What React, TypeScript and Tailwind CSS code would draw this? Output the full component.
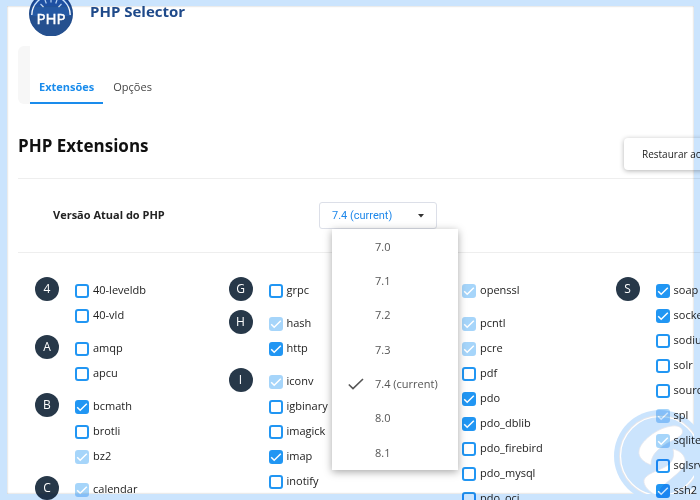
import { useState } from "react";

type State = "on" | "off" | "locked";
type Item = [name: string, state: State];
type Group = { letter: string; items: Item[] };

const columns: Group[][] = [
  [
    { letter: "4", items: [["40-leveldb", "off"], ["40-vld", "off"]] },
    { letter: "A", items: [["amqp", "off"], ["apcu", "off"]] },
    { letter: "B", items: [["bcmath", "on"], ["brotli", "off"], ["bz2", "locked"]] },
    { letter: "C", items: [["calendar", "locked"]] },
  ],
  [
    { letter: "G", items: [["grpc", "off"]] },
    { letter: "H", items: [["hash", "locked"], ["http", "on"]] },
    {
      letter: "I",
      items: [
        ["iconv", "locked"],
        ["igbinary", "off"],
        ["imagick", "off"],
        ["imap", "on"],
        ["inotify", "off"],
        ["intl", "locked"],
      ],
    },
  ],
  [
    { letter: "O", items: [["openssl", "locked"]] },
    {
      letter: "P",
      items: [
        ["pcntl", "locked"],
        ["pcre", "locked"],
        ["pdf", "off"],
        ["pdo", "on"],
        ["pdo_dblib", "on"],
        ["pdo_firebird", "off"],
        ["pdo_mysql", "off"],
        ["pdo_oci", "off"],
      ],
    },
  ],
  [
    {
      letter: "S",
      items: [
        ["soap", "on"],
        ["sockets", "on"],
        ["sodium", "off"],
        ["solr", "off"],
        ["sourceguardian", "off"],
        ["spl", "locked"],
        ["sqlite3", "locked"],
        ["sqlsrv", "off"],
        ["ssh2", "on"],
      ],
    },
  ],
];

const versions = ["7.0", "7.1", "7.2", "7.3", "7.4 (current)", "8.0", "8.1"];

function Extension({ name, state }: { name: string; state: State }) {
  return (
    <label className="flex h-[25px] items-center gap-1 text-[11px] text-[#222]">
      <span className="relative size-[14px] shrink-0">
        <input
          type="checkbox"
          defaultChecked={state !== "off"}
          disabled={state === "locked"}
          className="peer block size-[14px] appearance-none rounded-[3px] border-2 border-[#2196f3] bg-white checked:bg-[#2196f3] disabled:border-[#a6d5fa] disabled:bg-[#a6d5fa]"
        />
        <svg
          viewBox="0 0 14 14"
          className="pointer-events-none absolute inset-0 hidden size-[14px] peer-checked:block"
          fill="none"
          stroke="#fff"
          strokeWidth="1.5"
        >
          <path d="M2.2 7.2 5.2 10.2 11.8 3.8" />
        </svg>
      </span>
      {name}
    </label>
  );
}

function ExtensionGroup({ group }: { group: Group }) {
  return (
    <section className="mb-2 flex items-start gap-4">
      <h2 className="-mt-px flex size-6 shrink-0 items-center justify-center rounded-full bg-[#273849] text-xs font-medium text-white">
        {group.letter}
      </h2>
      <div>
        {group.items.map(([name, state]) => (
          <Extension key={name} name={name} state={state} />
        ))}
      </div>
    </section>
  );
}

function Logo() {
  return (
    <svg viewBox="0 0 44 44" className="size-11 shrink-0" aria-hidden="true">
      <circle cx="22" cy="22" r="22" fill="#1f4a8a" />
      <circle cx="22" cy="22" r="20.5" fill="#2559a3" />
      <path d="M1.5 24h41A20.5 20.5 0 0 1 1.5 24z" fill="#25508f" />
      <path d="M2.8 23A19.2 19.2 0 0 1 41.2 23" fill="none" stroke="#fff" strokeWidth="1.3" />
      <path
        d="M22 6v4.5M16 8l1.3 3.5M28 8l-1.3 3.5M11.5 12l3 3M32.5 12l-3 3"
        stroke="#e4ecf6"
        strokeWidth="1.2"
      />
      <text
        x="22"
        y="32"
        textAnchor="middle"
        fill="#fff"
        stroke="#fff"
        strokeWidth="0.5"
        fontSize="15"
        fontFamily="'Open Sans', sans-serif"
      >
        PHP
      </text>
    </svg>
  );
}

function Watermark() {
  return (
    <svg viewBox="0 0 92 92" className="size-[92px]" aria-hidden="true">
      <circle cx="46" cy="46" r="46" fill="#cbe4fd" />
      <circle cx="46" cy="46" r="40" fill="none" stroke="#e6e6ea" strokeWidth="2" />
      <circle cx="46" cy="46" r="39.5" fill="none" stroke="#fff" strokeWidth="1.2" />
      <g fill="#fff" stroke="#e4e6ec" strokeWidth="0.8">
        <path d="M37 55C29 52 24 47 25 41C26 32 42 18 58 16C66 15 70 19 68 24C65 28 56 31 49 36C42 41 37 46 37 55Z" />
        <path d="M59 39C67 41 72 46 71 53C69 61 57 68 49 76C46 79 45 82 44 86C36 83 29 76 30 70C32 64 43 61 51 57C58 53 61 47 59 39Z" />
      </g>
    </svg>
  );
}

export default function App() {
  const [version, setVersion] = useState("7.4 (current)");

  return (
    <div className="relative h-screen overflow-hidden bg-white font-['Open_Sans',sans-serif] text-[#222]">
      <header className="-mt-2 flex h-[54px] items-start gap-[17px] pl-[29px]">
        <Logo />
        <p className="pt-[7px] text-[15px] leading-6 font-bold text-[#1f4a8a]">PHP Selector</p>
      </header>

      <main className="pl-[18px]">
        <nav className="flex h-[58px] items-end rounded-l-md border-l-12 border-[#f7f7f7] text-[11px]">
          <a href="#ext" className="border-b-2 border-[#1a8cec] px-[9px] pb-[7px] leading-4 font-bold text-[#1a8cec]">
            Extensões
          </a>
          <a href="#opt" className="px-[10px] pb-[9px] leading-4 text-[#444]">
            Opções
          </a>
        </nav>

        <div className="flex h-[75px] items-start justify-between border-b border-[#eee] pt-[30px]">
          <h1 className="text-[17px] leading-6 font-bold text-[#111]">PHP Extensions</h1>
          <button className="-mr-16 mt-1 h-8 w-[140px] shrink-0 rounded-sm bg-white pl-[18px] text-left text-[10px] whitespace-nowrap text-[#222] shadow-[0_1px_5px_rgba(0,0,0,0.3)]">
            Restaurar ao padrão
          </button>
        </div>

        <div className="flex h-[74px] items-center border-b border-[#eee] pl-[35px]">
          <label htmlFor="version" className="w-[266px] text-[11px] font-bold">
            Versão Atual do PHP
          </label>
          <div className="relative">
            <select
              id="version"
              value={version}
              onChange={(e) => setVersion(e.target.value)}
              className="block h-[27px] w-[118px] appearance-none rounded-[3px] border border-[#dcdfe8] bg-white pt-px pl-3 font-[Roboto,sans-serif] text-[11px] text-[#1f88ea]"
            >
              {versions.map((v) => (
                <option key={v}>{v}</option>
              ))}
            </select>
            <svg viewBox="0 0 6 4" className="pointer-events-none absolute top-3 right-[13px] h-1 w-[6px]">
              <path d="M0 0h6L3 3.5z" fill="#333" />
            </svg>
            <ul
              role="listbox"
              aria-label="Versão Atual do PHP"
              className="absolute top-full left-[13px] z-10 flex h-[241px] w-[126px] flex-col bg-white pt-px text-[11px] text-[#555] shadow-[0_2px_8px_rgba(0,0,0,0.35)]"
            >
              {versions.map((v) => (
                <li key={v} role="option" aria-selected={v === version} className="flex-1">
                  <button onClick={() => setVersion(v)} className="flex h-full w-full items-center pl-4 text-left">
                    <span className="w-[27px]">
                      {v === version && (
                        <svg viewBox="0 0 16 12" className="h-3 w-4" fill="none" stroke="#555" strokeWidth="1.6">
                          <path d="M.8 6.5 5 10.6 15 1" />
                        </svg>
                      )}
                    </span>
                    {v}
                  </button>
                </li>
              ))}
            </ul>
          </div>
        </div>

        <div className="grid w-[116%] grid-cols-4 pt-[25px] pl-[17px]">
          {columns.map((groups, i) => (
            <div key={i}>
              {groups.map((g) => (
                <ExtensionGroup key={g.letter} group={g} />
              ))}
            </div>
          ))}
        </div>
      </main>

      <div className="pointer-events-none absolute inset-0 z-20 overflow-hidden border-6 border-l-7 border-[#cbe4fd] mix-blend-multiply shadow-[inset_0_0_2px_rgba(0,0,0,0.3)]">
        <div className="absolute -right-3 -bottom-2">
          <Watermark />
        </div>
      </div>
    </div>
  );
}
